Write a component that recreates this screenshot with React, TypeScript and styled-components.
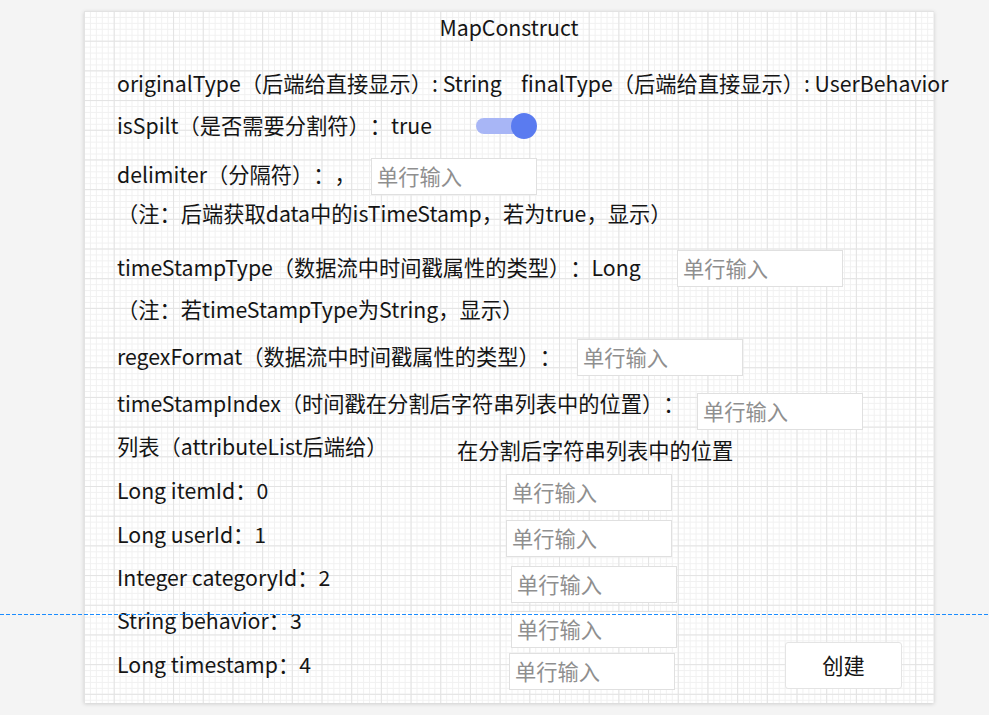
import React from "react";
import styled, { createGlobalStyle } from "styled-components";

const FS = "21.25px";

const Global = createGlobalStyle`
  html, body { margin: 0; padding: 0; background: #f4f4f4; }
  body {
    font-family: "Noto Sans CJK SC", "Noto Sans", sans-serif;
    color: #151515;
    text-spacing-trim: space-all;
  }
`;

const Page = styled.div`
  position: relative;
  width: 989px;
  height: 715px;
  padding: 11px 0 0 84px;
  box-sizing: border-box;
  overflow: hidden;
`;

const Panel = styled.div`
  width: 850px;
  height: 692px;
  box-sizing: border-box;
  padding: 1px 0 0 33px;
  background-color: #fff;
  background-image:
    linear-gradient(#e3e3e3 1px, transparent 1px),
    linear-gradient(90deg, #e3e3e3 1px, transparent 1px),
    linear-gradient(#f1f1f1 1px, transparent 1px),
    linear-gradient(90deg, #f1f1f1 1px, transparent 1px);
  background-size: 29.7px 29.7px, 29.7px 29.7px, 5.94px 5.94px, 5.94px 5.94px;
  box-shadow: 0 1px 4px rgba(0, 0, 0, 0.16);
  display: flex;
  flex-direction: column;
`;

const Title = styled.div`
  height: 30px;
  line-height: 30px;
  font-size: ${FS};
  text-align: center;
  margin-left: -33px;
  flex: none;
`;

const Row = styled.div<{ $mt: number; $cols?: string }>`
  display: grid;
  grid-template-columns: ${(p) => p.$cols || "auto"};
  grid-template-rows: 30px;
  align-items: center;
  height: 30px;
  flex: none;
  margin-top: ${(p) => p.$mt}px;
`;

const Label = styled.div<{ $dy?: number }>`
  font-size: ${FS};
  line-height: 30px;
  white-space: nowrap;
  text-spacing-trim: space-all;
  margin-top: ${(p) => (p.$dy || 0) * 2}px;
`;

const Field = styled.input<{ $dy?: number }>`
  width: 166px;
  height: 37px;
  box-sizing: border-box;
  margin: ${(p) => (p.$dy || 0) * 2 + 2}px 0 0 0;
  padding: 0 5px 2px;
  border: 1px solid #e0e0e0;
  background: #fff;
  font-family: "Noto Sans CJK SC", "Noto Sans", sans-serif;
  font-size: ${FS};
  color: #151515;
  outline: none;
  &::placeholder { color: #8f8f8f; }
`;

const Toggle = styled.span`
  position: relative;
  display: block;
  width: 61px;
  height: 26px;
  margin-top: 1px;
  &::before {
    content: "";
    position: absolute;
    left: 0;
    top: 5px;
    width: 56px;
    height: 16px;
    border-radius: 8px;
    background: #a8b6f6;
  }
  &::after {
    content: "";
    position: absolute;
    left: 35px;
    top: 0;
    width: 26px;
    height: 26px;
    border-radius: 50%;
    background: #5a7bf0;
  }
`;

const Button = styled.button`
  width: 117px;
  height: 47px;
  box-sizing: border-box;
  margin-top: 2px;
  border: 1px solid #e4e4e4;
  border-radius: 3px;
  background: #fff;
  font-family: "Noto Sans CJK SC", "Noto Sans", sans-serif;
  font-size: ${FS};
  color: #151515;
  padding: 0 0 2px;
`;

const Guide = styled.div`
  position: absolute;
  left: 0;
  right: 0;
  top: 614px;
  height: 1px;
  background: repeating-linear-gradient(90deg, #1a8cff 0 4px, transparent 4px 6px);
`;

const PH = "单行输入";

export default function App() {
  return (
    <>
      <Global />
      <Page>
        <Panel>
          <Title>MapConstruct</Title>
          <Row $mt={26} $cols="404px auto">
            <Label>originalType（后端给直接显示）: String</Label>
            <Label>finalType（后端给直接显示）: UserBehavior</Label>
          </Row>
          <Row $mt={12} $cols="359px auto">
            <Label>isSpilt（是否需要分割符）：true</Label>
            <Toggle />
          </Row>
          <Row $mt={19} $cols="254px 166px">
            <Label>delimiter（分隔符）：，</Label>
            <Field $dy={1.5} placeholder={PH} />
          </Row>
          <Row $mt={9}>
            <Label>（注：后端获取data中的isTimeStamp，若为true，显示）</Label>
          </Row>
          <Row $mt={24} $cols="560px 166px">
            <Label>timeStampType（数据流中时间戳属性的类型）：Long</Label>
            <Field $dy={0.5} placeholder={PH} />
          </Row>
          <Row $mt={12}>
            <Label>（注：若timeStampType为String，显示）</Label>
          </Row>
          <Row $mt={17} $cols="460px 166px">
            <Label>regexFormat（数据流中时间戳属性的类型）：</Label>
            <Field placeholder={PH} />
          </Row>
          <Row $mt={17} $cols="580px 166px">
            <Label>timeStampIndex（时间戳在分割后字符串列表中的位置）：</Label>
            <Field $dy={7.5} placeholder={PH} />
          </Row>
          <Row $mt={13} $cols="340px auto">
            <Label>列表（attributeList后端给）</Label>
            <Label $dy={4}>在分割后字符串列表中的位置</Label>
          </Row>
          <Row $mt={14} $cols="389px 166px">
            <Label>Long itemId：0</Label>
            <Field $dy={1} placeholder={PH} />
          </Row>
          <Row $mt={14} $cols="389px 166px">
            <Label>Long userId：1</Label>
            <Field $dy={3} placeholder={PH} />
          </Row>
          <Row $mt={13} $cols="394px 166px">
            <Label>Integer categoryId：2</Label>
            <Field $dy={6} placeholder={PH} />
          </Row>
          <Row $mt={13} $cols="394px 166px">
            <Label>String behavior：3</Label>
            <Field $dy={8} placeholder={PH} />
          </Row>
          <Row $mt={14} $cols="392px 276px 117px">
            <Label>Long timestamp：4</Label>
            <Field $dy={6} placeholder={PH} />
            <Button>创建</Button>
          </Row>
        </Panel>
        <Guide />
      </Page>
    </>
  );
}
